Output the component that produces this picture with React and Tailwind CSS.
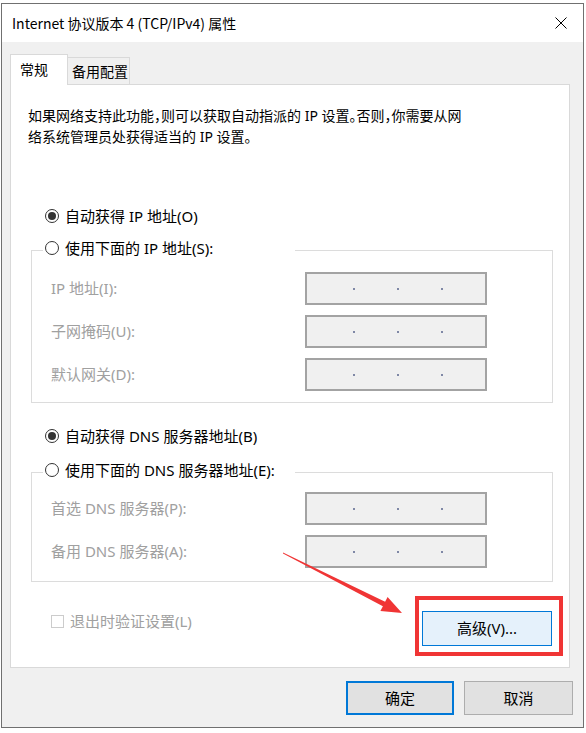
import React from "react";

const Radio = ({ checked }) => (
  <span className="w-[14px] h-[14px] rounded-full border border-[#333333] bg-white flex items-center justify-center shrink-0">
    {checked && <span className="w-[8px] h-[8px] rounded-full bg-[#333333]" />}
  </span>
);

const IpField = () => (
  <div className="w-[182px] h-[33px] border-2 border-[#a3a3a3] bg-[#f0f0f0] flex items-center pl-[46px] gap-[42px]">
    <span className="w-[2px] h-[2px] bg-[#7f88a6]" />
    <span className="w-[2px] h-[2px] bg-[#7f88a6]" />
    <span className="w-[2px] h-[2px] bg-[#7f88a6]" />
  </div>
);

const FieldRow = ({ label }) => (
  <div className="flex items-center pl-[19px]">
    <span className="w-[254px] text-[#a0a0a0]">{label}</span>
    <IpField />
  </div>
);

const GroupBox = ({ title, rows, top, bottom }) => (
  <fieldset className={`ml-[20px] w-[522px] border border-[#dcdcdc] ${bottom}`}>
    <legend className="ml-[11px] w-[252px] h-[24px] pl-[2px] pb-[4px] flex items-center gap-[6px] text-black">
      <Radio />
      <span>{title}</span>
    </legend>
    <div className={`flex flex-col gap-[10px] ${top}`}>
      {rows.map((r) => (
        <FieldRow key={r} label={r} />
      ))}
    </div>
  </fieldset>
);

export default function App() {
  return (
    <div className="relative w-[586px] h-[733px] bg-white overflow-hidden pt-[3px] pl-[1px] font-['Noto_Sans','Noto_Sans_CJK_SC',sans-serif] text-[15px] text-black [font-feature-settings:'halt']">
      <div className="w-[583px] h-[725px] border border-[#707070] flex flex-col">
        {/* title bar */}
        <div className="h-[38px] bg-white flex items-center justify-between pl-[10px] pr-[16px] shrink-0">
          <span className="text-[14px] font-['Noto_Sans_CJK_SC',sans-serif]">Internet 协议版本 4 (TCP/IPv4) 属性</span>
          <svg width="12" height="12" viewBox="0 0 12 12">
            <path d="M0.5 0.5 L11.5 11.5 M11.5 0.5 L0.5 11.5" stroke="#000" strokeWidth="1" />
          </svg>
        </div>

        <div className="flex-1 bg-[#f0f0f0] pt-[12px] pl-[8px] flex flex-col">
          {/* tabs */}
          <div className="flex items-end h-[30px] text-[14px] whitespace-nowrap">
            <div className="relative z-10 -mb-px h-[31px] w-[58px] bg-white border-t border-l border-r border-[#d9d9d9] pl-[9px] pb-px flex items-center">
              常规
            </div>
            <div className="h-[27px] w-[62px] bg-[#f0f0f0] border-t border-r border-[#d9d9d9] pl-[4px] flex items-center">
              备用配置
            </div>
          </div>

          {/* panel */}
          <div className="w-[560px] h-[584px] bg-white border border-[#d9d9d9] flex flex-col">
            <p className="pl-[17px] pt-[20px] text-[14px] leading-[21px] whitespace-nowrap">
              如果网络支持此功能，则可以获取自动指派的 IP 设置。否则，你需要从网
              <br />
              络系统管理员处获得适当的 IP 设置。
            </p>

            <div className="mt-[59px] ml-[34px] h-[20px] flex items-center gap-[6px]">
              <Radio checked />
              <span>自动获得 IP 地址(O)</span>
            </div>

            <div className="mt-[12px]">
              <GroupBox
                title="使用下面的 IP 地址(S):"
                rows={["IP 地址(I):", "子网掩码(U):", "默认网关(D):"]}
                top="mt-[10px]"
                bottom="pb-[11px]"
              />
            </div>

            <div className="mt-[23px] ml-[34px] h-[20px] flex items-center gap-[6px]">
              <Radio checked />
              <span>自动获得 DNS 服务器地址(B)</span>
            </div>

            <div className="mt-[14px]">
              <GroupBox
                title="使用下面的 DNS 服务器地址(E):"
                rows={["首选 DNS 服务器(P):", "备用 DNS 服务器(A):"]}
                top="mt-[8px]"
                bottom="pb-[13px]"
              />
            </div>

            <div className="mt-[29px] flex items-start justify-between pl-[40px] pr-[17px]">
              <div className="h-[20px] flex items-center gap-[6px] text-[#a0a0a0]">
                <span className="w-[13px] h-[13px] border border-[#cccccc] bg-white" />
                <span>退出时验证设置(L)</span>
              </div>
              <button className="w-[130px] h-[35px] bg-[#e5f1fb] border border-[#0078d7] flex items-center justify-center">
                高级(V)...
              </button>
            </div>
          </div>

          {/* dialog buttons */}
          <div className="mt-[13px] flex justify-end gap-[10px] pr-[10px]">
            <button className="w-[108px] h-[34px] bg-[#e1e1e1] border-2 border-[#0078d7] flex items-center justify-center">
              确定
            </button>
            <button className="w-[109px] h-[34px] bg-[#e1e1e1] border border-[#adadad] flex items-center justify-center">
              取消
            </button>
          </div>
        </div>
      </div>

      {/* annotation: red highlight and arrow */}
      <div className="absolute left-[415px] top-[596px] w-[148px] h-[60px] border-4 border-[#f03535]" />
      <svg className="absolute left-0 top-0" width="586" height="733" viewBox="0 0 586 733">
        <polygon
          points="283,552.5 385.1,601.8 387.6,596.9 402,613 380.4,611.1 382.9,606.2 283,553.5"
          fill="#f03535"
        />
      </svg>
    </div>
  );
}
